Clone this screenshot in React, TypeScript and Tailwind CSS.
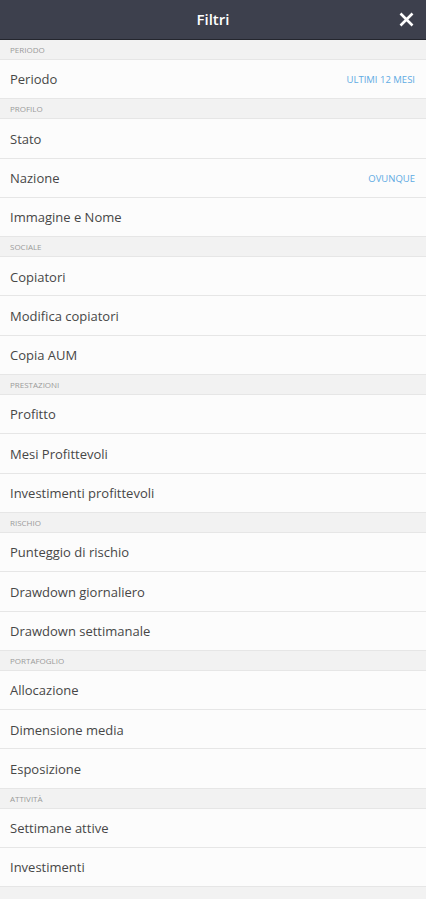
import React from 'react';

type Row = { label: string; value?: string };
type Section = { title: string; rows: Row[] };

const sections: Section[] = [
  { title: 'Periodo', rows: [{ label: 'Periodo', value: 'Ultimi 12 mesi' }] },
  {
    title: 'Profilo',
    rows: [{ label: 'Stato' }, { label: 'Nazione', value: 'Ovunque' }, { label: 'Immagine e Nome' }],
  },
  {
    title: 'Sociale',
    rows: [{ label: 'Copiatori' }, { label: 'Modifica copiatori' }, { label: 'Copia AUM' }],
  },
  {
    title: 'Prestazioni',
    rows: [{ label: 'Profitto' }, { label: 'Mesi Profittevoli' }, { label: 'Investimenti profittevoli' }],
  },
  {
    title: 'Rischio',
    rows: [{ label: 'Punteggio di rischio' }, { label: 'Drawdown giornaliero' }, { label: 'Drawdown settimanale' }],
  },
  {
    title: 'Portafoglio',
    rows: [{ label: 'Allocazione' }, { label: 'Dimensione media' }, { label: 'Esposizione' }],
  },
  { title: 'Attività', rows: [{ label: 'Settimane attive' }, { label: 'Investimenti' }] },
];

function FilterRow({ row }: { row: Row }) {
  return (
    <div className="h-[39.3px] box-border border-b border-[#e6e6e6] bg-[#fcfcfc] flex items-center justify-between pl-[10px] pr-[11px] pt-[2px]">
      <span className="text-[13px] text-[#474747]">{row.label}</span>
      {row.value && (
        <span className="text-[9.5px] uppercase text-[#5fabe3] font-medium">{row.value}</span>
      )}
    </div>
  );
}

export default function App() {
  return (
    <div className="w-[426px] h-[899px] overflow-hidden bg-[#f2f2f2] font-['Open_Sans','Liberation_Sans',sans-serif]">
      <header className="h-[40px] box-border bg-[#3d404d] border-b border-[#24262e] flex items-center justify-center relative">
        <span className="text-white text-[15px] font-semibold">Filtri</span>
        <button className="absolute right-[12px] top-[11px] w-[16px] h-[16px] flex items-center justify-center">
          <svg width="15" height="15" viewBox="0 0 15 15">
            <path d="M1.5 1.5 L13.5 13.5 M13.5 1.5 L1.5 13.5" stroke="#ffffff" strokeWidth="2.6" strokeLinecap="butt" />
          </svg>
        </button>
      </header>

      <div className="flex flex-col">
        {sections.map((s) => (
          <div key={s.title} className="flex flex-col">
            <div className="h-[20px] box-border border-b border-[#e6e6e6] bg-[#f2f2f2] flex items-center px-[10px] pt-[1px]">
              <span className="text-[8px] uppercase text-[#9a9a9a]">{s.title}</span>
            </div>
            {s.rows.map((r) => (
              <FilterRow key={r.label} row={r} />
            ))}
          </div>
        ))}
      </div>
    </div>
  );
}
